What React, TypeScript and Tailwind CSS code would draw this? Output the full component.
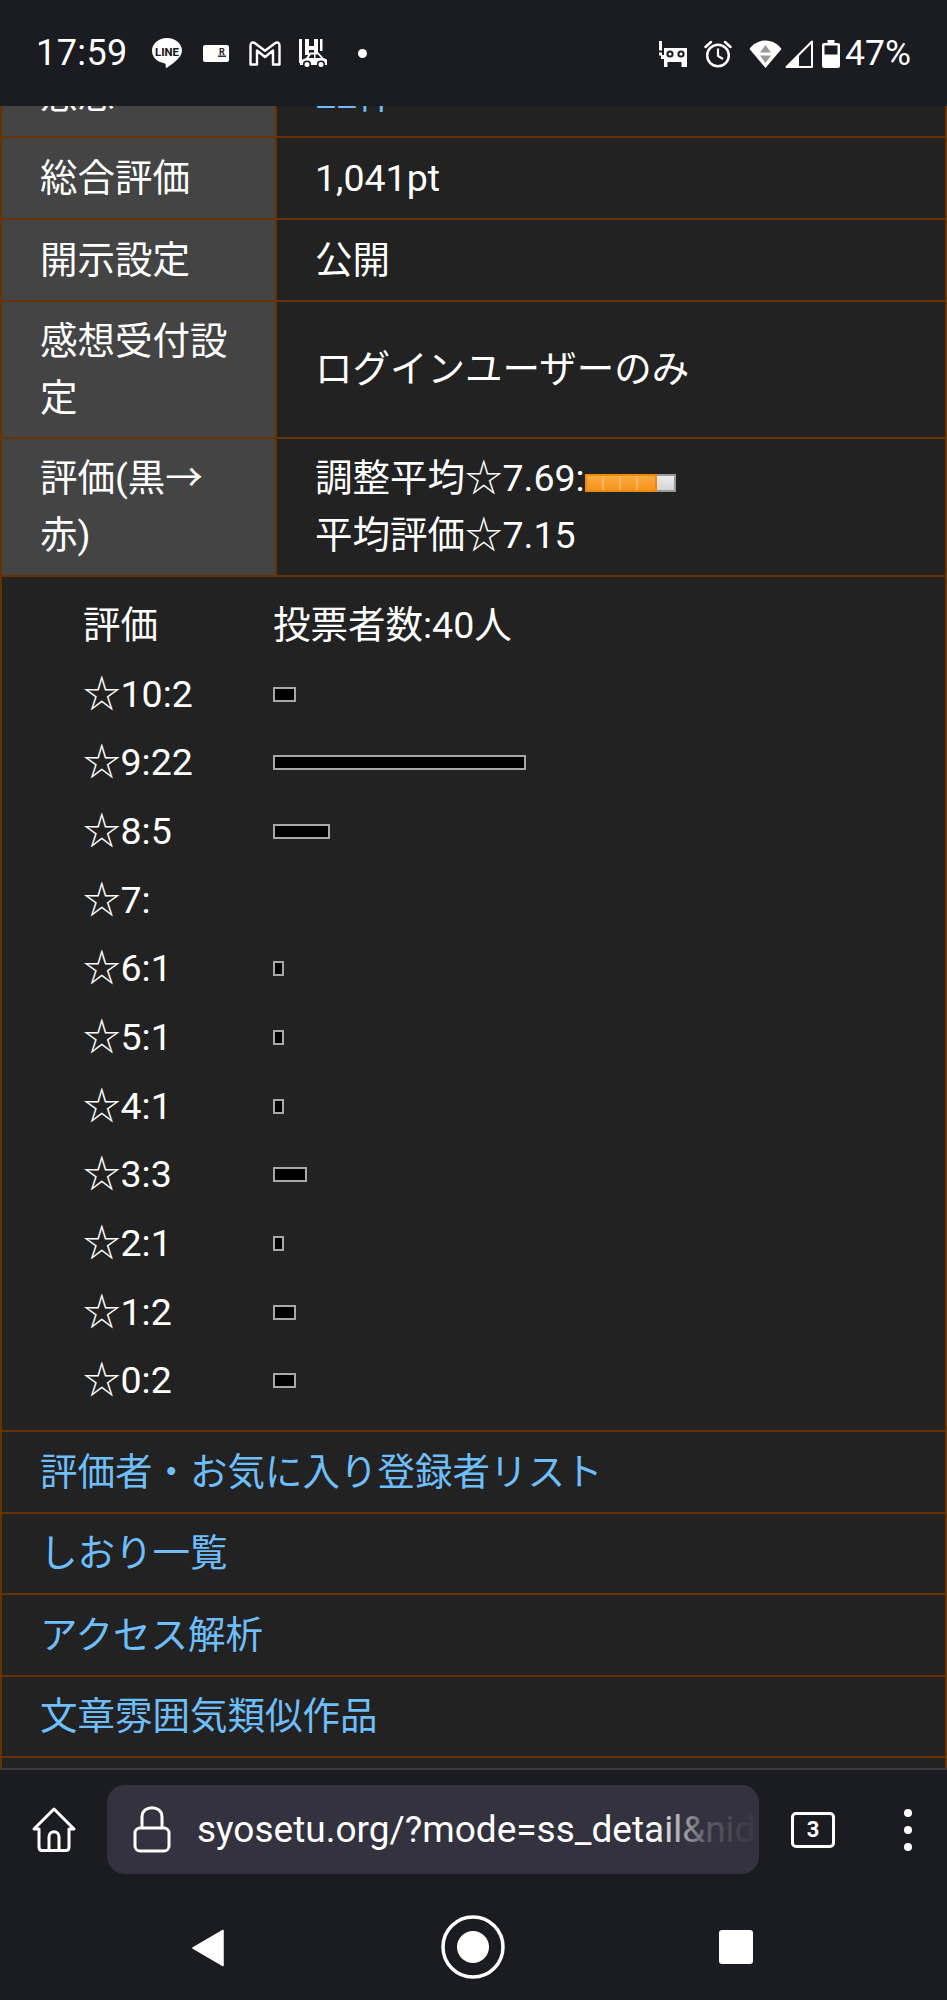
const border = "border-[#663300]";
const linkColor = "text-[#6ebefa]";

function Row({ h, label, children }: { h: string; label: string; children: React.ReactNode }) {
  return (
    <div className={`flex border-b-2 ${border} ${h}`}>
      <div className={`w-[275px] shrink-0 bg-[#444444] border-r-2 ${border} pl-[38px] pr-[42px] flex items-center`}>
        <span className="block">{label}</span>
      </div>
      <div className="flex-1 pl-[38px] flex items-center">
        <div>{children}</div>
      </div>
    </div>
  );
}

function LinkRow({ h, text }: { h: string; text: string }) {
  return (
    <div className={`${h} border-b-2 ${border} pl-[38px] flex items-center ${linkColor}`}>{text}</div>
  );
}

const votes: [string, string][] = [
  ["☆10:2", "w-[23px]"],
  ["☆9:22", "w-[253px]"],
  ["☆8:5", "w-[57px]"],
  ["☆7:", "hidden"],
  ["☆6:1", "w-[11px]"],
  ["☆5:1", "w-[11px]"],
  ["☆4:1", "w-[11px]"],
  ["☆3:3", "w-[34px]"],
  ["☆2:1", "w-[11px]"],
  ["☆1:2", "w-[23px]"],
  ["☆0:2", "w-[23px]"],
];

function VoteRow({ label, children }: { label: string; children?: React.ReactNode }) {
  return (
    <div className="flex h-[68.7px] items-center pl-[81px]">
      <div className="w-[190px] shrink-0">{label}</div>
      {children}
    </div>
  );
}

function StatusLeft() {
  return (
    <div className="flex items-center">
      <span className="text-[36px] tracking-[0.4px] text-white w-[115px]">17:59</span>
      <svg width="32" height="32" viewBox="0 0 32 32" className="mr-[20px] mt-[-1px]">
        <path d="M16 1C7.500 1 1 6.800 1 13.800c0 6.300 5.200 11.400 12.300 12.400.6.100 1.200.5 1.300 1l.2 3c.1.7.8.9 1.400.4 3-2.400 14.800-9.200 14.800-16.800C31 6.800 24.500 1 16 1z" fill="#fff" />
        <text x="16" y="18.500" textAnchor="middle" fontSize="11.500" fontWeight="800" fontFamily="Roboto" fill="#1b1b22" textLength="24" lengthAdjust="spacingAndGlyphs">LINE</text>
      </svg>
      <svg width="26" height="17" viewBox="0 0 26 17" className="mr-[20px]">
        <rect x="0" y="0" width="26" height="17" rx="2" fill="#fff" />
        <text x="19" y="9.500" textAnchor="middle" fontSize="9" fontWeight="700" fontFamily="Roboto" fill="#1b1b22">R</text>
        <rect x="15" y="10.500" width="8" height="1.400" fill="#1b1b22" />
      </svg>
      <svg width="32" height="25" viewBox="0 0 32 25" className="mr-[18px]">
        <path d="M1.500 4.500 C1.500 1.500 4 .8 6 2.200 L16 9.800 L26 2.200 C28 .8 30.500 1.500 30.500 4.500 V23.500 H24 V9.500 L16 16 L8 9.500 V23.500 H1.500 Z" fill="none" stroke="#fff" strokeWidth="2.400" strokeLinejoin="round" />
      </svg>
      <svg width="29" height="30" viewBox="0 0 29 30" className="mr-[30px]">
        <path d="M0 0h3v24H0zM6 0h4v7h5V0h4v14h-4v-3h-5v5H6zM21 0h2.500v12H21z" fill="#fff" />
        <path d="M1 26v-4.500l6-2.500 4-5.500h8.500l5 5.500 3.500 1.500v5.500z" fill="#fff" />
        <path d="M12 15.500h3v3.500H9.500z" fill="#1b1b22" />
        <path d="M16.500 15.500h2.500l3 3.500h-5.500z" fill="#1b1b22" />
        <circle cx="8" cy="25.500" r="3.300" fill="#fff" stroke="#1b1b22" strokeWidth="1.600" />
        <circle cx="22" cy="25.500" r="3.300" fill="#fff" stroke="#1b1b22" strokeWidth="1.600" />
      </svg>
      <div className="w-[9px] h-[9px] rounded-full bg-white" />
    </div>
  );
}

function StatusRight() {
  return (
    <div className="flex items-center">
      <svg width="28" height="26" viewBox="0 0 28 26" className="mr-[17px]">
        <path d="M0 0h3v9.500H0zM0 11.500h3v3H0z" fill="#fff" />
        <path d="M5 7h23v19h-5.500v-5H8.500v5H5v-8H2v-4h3z" fill="#fff" />
        <circle cx="11" cy="13" r="3.600" fill="#1b1b22" />
        <circle cx="22" cy="13" r="3.600" fill="#1b1b22" />
        <circle cx="11" cy="13" r="1.600" fill="#fff" />
        <circle cx="22" cy="13" r="1.600" fill="#fff" />
      </svg>
      <svg width="28" height="28" viewBox="0 0 28 28" className="mr-[17px]" fill="none" stroke="#fff" strokeWidth="2.500">
        <circle cx="14" cy="15.500" r="10.800" />
        <path d="M14 8.500V16l5 3" strokeWidth="2.200" />
        <path d="M1.500 7 L7 2M26.500 7 L21 2" strokeLinecap="round" />
      </svg>
      <svg width="33" height="28" viewBox="0 0 33 28" className="mr-[3px]">
        <path d="M16.500 28 L0.500 9 C4 4 10 0.500 16.500 0.500 S29 4 32.500 9Z" fill="#fff" />
        <path d="M16.500 5l5.500 7.500H11z" fill="#9a9a9a" />
        <path d="M16.500 23l-5.500-7.500h11z" fill="#9a9a9a" />
      </svg>
      <svg width="28" height="28" viewBox="0 0 28 28" className="mr-[9px]">
        <path d="M27 1.500V27H1.500Z" fill="none" stroke="#fff" strokeWidth="2" strokeLinejoin="round" />
        <path d="M14 14 V27 H1.500 Z" fill="#fff" />
      </svg>
      <svg width="18" height="28" viewBox="0 0 18 28" className="mr-[5px]">
        <path d="M5.500 0h7v3H16c1.100 0 2 .9 2 2v21c0 1.100-.9 2-2 2H2c-1.100 0-2-.9-2-2V5c0-1.100.9-2 2-2h3.500z" fill="#fff" />
        <rect x="2.500" y="5.500" width="13" height="9" fill="#1b1b22" />
      </svg>
      <span className="text-[35.500px] text-white">47%</span>
    </div>
  );
}

export default function App() {
  return (
    <div
      className="w-[947px] h-[2000px] flex flex-col bg-[#1b1b22] text-white text-[37.500px] leading-[57px] overflow-hidden"
      style={{ fontFamily: 'Roboto, "Noto Sans CJK JP", sans-serif' }}
    >
      <div className="h-[106px] shrink-0 flex items-center justify-between pl-[36px] pr-[36px] pt-[1px] bg-[#1b1b22]">
        <StatusLeft />
        <StatusRight />
      </div>

      <main className={`h-[1662px] shrink-0 bg-[#222222] border-x-2 ${border} overflow-hidden`}>
        <div className={`h-[32px] overflow-hidden border-b-2 ${border}`}>
          <div className="flex h-[82px] mt-[-52px]">
            <div className={`w-[275px] shrink-0 bg-[#444444] border-r-2 ${border} pl-[38px] flex items-center`}>感想</div>
            <div className={`flex-1 pl-[38px] flex items-center ${linkColor}`}>22件</div>
          </div>
        </div>
        <Row h="h-[82px]" label="総合評価">1,041pt</Row>
        <Row h="h-[82px]" label="開示設定">公開</Row>
        <Row h="h-[137px]" label="感想受付設定">ログインユーザーのみ</Row>
        <Row h="h-[138px]" label="評価(黒→赤)">
          <div className="flex items-center">
            <span>調整平均☆7.69:</span>
            <span className="flex h-[18px] w-[91px] mt-[8px]">
              <span className="flex w-[72px] h-full border-2 border-[#e98b0b] bg-gradient-to-b from-[#fbaa3c] to-[#f7931e]">
                <span className="w-[17px] border-r-2 border-[#fbb75f]" />
                <span className="w-[17px] border-r-2 border-[#fbb75f]" />
                <span className="w-[17px] border-r-2 border-[#fbb75f]" />
              </span>
              <span className="flex-1 h-full border-2 border-l-0 border-[#999999] bg-gradient-to-b from-[#ececec] to-[#d4d4d4]" />
            </span>
          </div>
          <div>平均評価☆7.15</div>
        </Row>

        <div className={`h-[855px] pt-[14px] border-b-2 ${border}`}>
          <VoteRow label="評価">
            <span>投票者数:40人</span>
          </VoteRow>
          {votes.map(([label, w]) => (
            <VoteRow key={label} label={label}>
              <div className={`${w} h-[15px] bg-black border-2 border-[#a8a8a8]`} />
            </VoteRow>
          ))}
        </div>

        <LinkRow h="h-[82px]" text="評価者・お気に入り登録者リスト" />
        <LinkRow h="h-[81px]" text="しおり一覧" />
        <LinkRow h="h-[82px]" text="アクセス解析" />
        <LinkRow h="h-[81px]" text="文章雰囲気類似作品" />
      </main>

      <div className="h-[232px] shrink-0 border-t-2 border-[#3a3a40] bg-[#1b1b22] flex flex-col">
        <div className="flex items-center h-[123px] pb-[4px]">
          <svg width="44" height="46" viewBox="0 0 44 46" className="ml-[32px] mr-[31px]" fill="none" stroke="#fff" strokeWidth="3" strokeLinejoin="round">
            <path d="M22 2 L42 22 H37 V40 C37 42 36 43.500 34 43.500 H10 C8 43.500 7 42 7 40 V22 H2 Z" />
            <path d="M17 43 V30 C17 23 27 23 27 30 V43" />
          </svg>
          <div className="relative w-[652px] h-[89px] rounded-[18px] bg-[#33323e] flex items-center pl-[26px] overflow-hidden">
            <svg width="38" height="47" viewBox="0 0 38 47" className="shrink-0 mr-[26px]" fill="none" stroke="#fff" strokeWidth="3">
              <path d="M9 22 V11 C9 -1.500 29 -1.500 29 11 V22" />
              <rect x="2" y="22" width="34" height="23" rx="5" />
            </svg>
            <span className="whitespace-nowrap text-[37px] text-white">syosetu.org/?mode=ss_detail&amp;nid=1234</span>
            <div className="absolute right-0 top-0 h-full w-[105px] bg-gradient-to-r from-[#33323e00] via-[#33323ecc] to-[#33323e]" />
          </div>
          <div className="ml-[32px] w-[44px] h-[36px] border-[3px] border-white rounded-[5px] flex items-center justify-center text-[22px] font-bold leading-none">3</div>
          <div className="ml-[69px] flex flex-col gap-[9px]">
            <div className="w-[8px] h-[8px] rounded-full bg-white" />
            <div className="w-[8px] h-[8px] rounded-full bg-white" />
            <div className="w-[8px] h-[8px] rounded-full bg-white" />
          </div>
        </div>
        <div className="flex items-start pt-[22px]">
          <svg width="32" height="38" viewBox="0 0 32 38" className="ml-[192px] mt-[14px]">
            <path d="M31 1.500 V36.500 L1 19 Z" fill="#fff" stroke="#fff" strokeWidth="1.500" strokeLinejoin="round" />
          </svg>
          <svg width="64" height="64" viewBox="0 0 64 64" className="ml-[217px]">
            <circle cx="32" cy="32" r="30" fill="none" stroke="#fff" strokeWidth="3.500" />
            <circle cx="32" cy="32" r="16" fill="#fff" />
          </svg>
          <div className="ml-[214px] mt-[15px] w-[34px] h-[34px] rounded-[3px] bg-white" />
        </div>
      </div>
    </div>
  );
}
